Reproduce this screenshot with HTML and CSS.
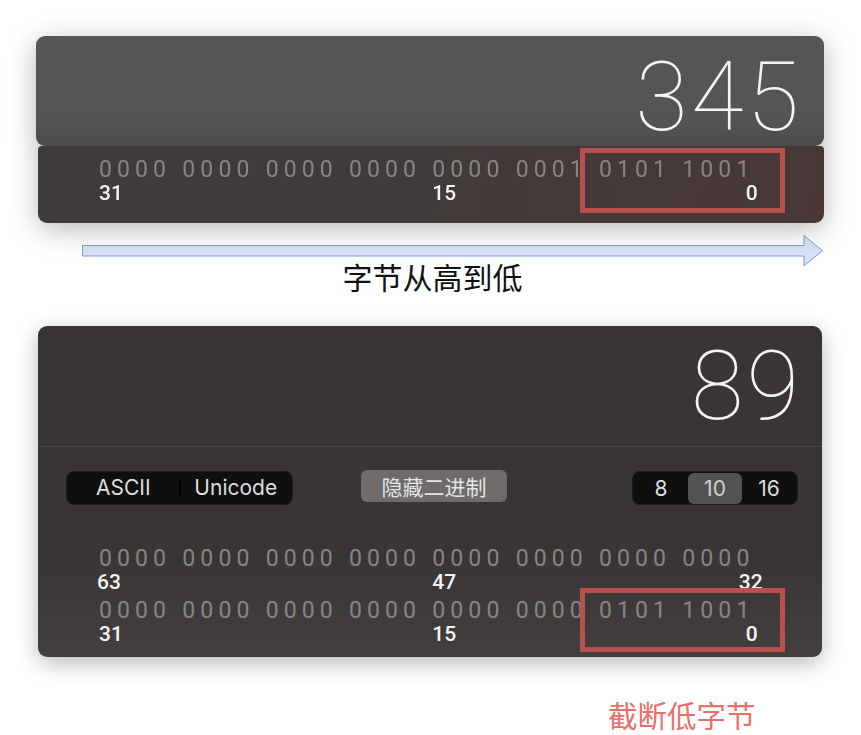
FILE: index.html
```html
<!DOCTYPE html>
<html lang="zh-CN">
<head>
<meta charset="utf-8">
<title>截断低字节</title>
<link rel="stylesheet" href="styles.css">
</head>
<body>
<main class="stage">

  <!-- 345: display plus its 32-bit strip -->
  <section class="stack">
    <div class="display display-top">
      <span class="value">345</span>
    </div>
    <div class="strip">
      <div class="bits-row">
        <span class="nib">0000</span><span class="nib">0000</span><span class="nib">0000</span><span class="nib">0000</span><span class="nib">0000</span><span class="nib">0001</span><span class="nib">0101</span><span class="nib">1001</span>
      </div>
      <div class="bits-labels">
        <span class="lbl lbl-hi">31</span>
        <span class="lbl lbl-mid">15</span>
        <span class="lbl lbl-lo">0</span>
      </div>
      <div class="cut cut-top"></div>
    </div>
  </section>

  <!-- direction arrow -->
  <div class="legend">
    <svg class="arrow" width="742" height="32" viewBox="0 0 742 32">
      <polygon points="0.5,10.5 722,10.5 722,0.5 740.5,15.75 722,31 722,21 0.5,21" fill="#d6e3f4" stroke="#7d9dd1" stroke-width="1"/>
    </svg>
    <p class="legend-text">字节从高到低</p>
  </div>

  <!-- 89: full calculator panel -->
  <section class="panel">
    <div class="display display-main">
      <span class="value">89</span>
    </div>
    <div class="controls">
      <div class="seg seg-text">
        <span class="seg-item">ASCII</span>
        <span class="seg-divider"></span>
        <span class="seg-item">Unicode</span>
      </div>
      <button class="btn-hide" type="button">隐藏二进制</button>
      <div class="seg seg-base">
        <span class="seg-item">8</span>
        <span class="seg-item is-active">10</span>
        <span class="seg-item">16</span>
      </div>
    </div>
    <div class="bits">
      <div class="bits-row">
        <span class="nib">0000</span><span class="nib">0000</span><span class="nib">0000</span><span class="nib">0000</span><span class="nib">0000</span><span class="nib">0000</span><span class="nib">0000</span><span class="nib">0000</span>
      </div>
      <div class="bits-labels">
        <span class="lbl lbl-hi lbl-63">63</span>
        <span class="lbl lbl-mid">47</span>
        <span class="lbl lbl-lo lbl-32">32</span>
      </div>
      <div class="bits-row bits-row-next">
        <span class="nib">0000</span><span class="nib">0000</span><span class="nib">0000</span><span class="nib">0000</span><span class="nib">0000</span><span class="nib">0000</span><span class="nib">0101</span><span class="nib">1001</span>
      </div>
      <div class="bits-labels">
        <span class="lbl lbl-hi">31</span>
        <span class="lbl lbl-mid">15</span>
        <span class="lbl lbl-lo">0</span>
      </div>
    </div>
    <div class="cut cut-bottom"></div>
  </section>

  <p class="caption">截断低字节</p>
</main>
</body>
</html>
```

FILE: styles.css
```css
* {
  box-sizing: border-box;
}

html, body {
  margin: 0;
  padding: 0;
  background: #ffffff;
}

body {
  font-family: "Roboto", "Noto Sans CJK SC", sans-serif;
  width: 861px;
  height: 735px;
  overflow: hidden;
}

.stage {
  padding-top: 36px;
}

/* ---------- big number display ---------- */
.display {
  text-align: right;
}

.value {
  display: inline-block;
  font-family: "Roboto", sans-serif;
  font-weight: 100;
  font-size: 96px;
  line-height: 96px;
  letter-spacing: 3px;
  color: #f4f4f4;
}

/* ---------- top stack (display + strip) ---------- */
.stack {
  margin-left: 36px;
  width: 788px;
  filter: drop-shadow(0 6px 14px rgba(0, 0, 0, 0.28));
}

.display-top {
  height: 110px;
  padding: 13px 22px 0 0;
  border-radius: 9px;
  background: linear-gradient(180deg, #575656 0%, #555454 75%, #4d4c4c 100%);
}

.strip {
  position: relative;
  margin-left: 2px;
  height: 77px;
  padding: 12px 0 0 61px;
  border-radius: 4px 4px 9px 9px;
  background: linear-gradient(100deg, #3e3b3a 0%, #3f3b3a 45%, #493737 100%);
}

/* ---------- binary rows ---------- */
.bits-row {
  display: flex;
  height: 25px;
  line-height: 25px;
  font-family: "Roboto", sans-serif;
  font-size: 23px;
  font-variant-numeric: tabular-nums;
  letter-spacing: 5.1px;
  color: #878584;
  white-space: nowrap;
}

.strip .bits-row {
  height: 24px;
  line-height: 24px;
}

.nib {
  display: block;
  width: 83.333px;
  flex: none;
}

.bits-labels {
  display: grid;
  grid-template-columns: repeat(8, 83.333px);
  height: 22px;
  line-height: 22px;
  font-family: "Roboto", sans-serif;
  font-size: 21px;
  font-weight: 500;
  color: #f3f3f3;
}

.lbl-hi {
  grid-column: 1;
}

.lbl-63 {
  margin-left: -2px;
}

.lbl-mid {
  grid-column: 5;
}

.lbl-lo {
  grid-column: 8;
  justify-self: end;
  margin-right: 8px;
}

.lbl-32 {
  margin-right: 3px;
}

.bits-row-next {
  margin-top: 5px;
}

/* ---------- red highlight box ---------- */
.cut {
  position: absolute;
  width: 205px;
  height: 65px;
  border: 5px solid #b9504d;
}

.cut-top {
  left: 542px;
  top: 2px;
}

.cut-bottom {
  left: 542px;
  top: 262px;
  height: 64px;
}

/* ---------- arrow legend ---------- */
.legend {
  margin-top: 12px;
}

.arrow {
  display: block;
  margin-left: 82px;
}

.legend-text {
  margin: -5px 0 0 0;
  padding-left: 4px;
  text-align: center;
  font-family: "Noto Sans CJK SC", sans-serif;
  font-size: 30px;
  line-height: 29px;
  color: #111111;
}

/* ---------- calculator panel ---------- */
.panel {
  position: relative;
  margin: 35px 0 0 38px;
  width: 784px;
  height: 331px;
  border-radius: 9px;
  background: linear-gradient(180deg, #383534 0%, #393535 70%, #433f3f 100%);
  box-shadow: 0 6px 22px rgba(0, 0, 0, 0.28);
}

.display-main {
  height: 121px;
  padding: 12px 20px 0 0;
  border-bottom: 1px solid #4c4847;
}

.controls {
  display: flex;
  align-items: flex-start;
  padding: 24px 24px 0 28px;
  height: 99px;
}

.seg {
  display: flex;
  align-items: center;
  height: 34px;
  padding: 1px;
  border-radius: 8px;
  background: #0f0f0f;
  border: 1px solid #1c1c1c;
  font-family: "Inter", "Roboto", sans-serif;
  font-size: 21px;
  color: #dedede;
}

.seg-text {
  width: 227px;
}

.seg-text .seg-item {
  flex: 1;
  text-align: center;
  line-height: 30px;
}

.seg-divider {
  width: 2px;
  height: 18px;
  background: #000000;
  flex: none;
}

.btn-hide {
  margin: -1px 0 0 68px;
  width: 146px;
  height: 32px;
  padding: 0;
  border: none;
  border-radius: 6px;
  background: #6e6b6a;
  font-family: "Noto Sans CJK SC", sans-serif;
  font-size: 21px;
  line-height: 32px;
  color: #e4e4e4;
}

.seg-base {
  margin-left: auto;
  width: 166px;
}

.seg-base .seg-item {
  flex: 1;
  height: 31px;
  line-height: 31px;
  text-align: center;
  border-radius: 6px;
}

.seg-base .is-active {
  background: #545353;
  color: #cfcfcf;
}

.bits {
  padding-left: 61px;
}

/* ---------- caption ---------- */
.caption {
  margin: 42px 0 0 0;
  padding-left: 608px;
  font-family: "Noto Sans CJK SC", sans-serif;
  font-size: 29.5px;
  line-height: 30px;
  color: #e8706b;
}
```
